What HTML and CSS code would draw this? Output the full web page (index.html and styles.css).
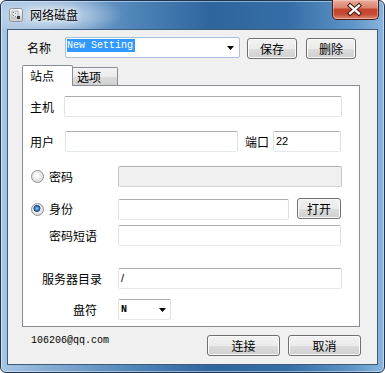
FILE: index.html
```html
<!DOCTYPE html>
<html lang="zh">
<head>
<meta charset="utf-8">
<title>网络磁盘</title>
<link rel="stylesheet" href="styles.css">
</head>
<body>
<div class="window">
  <div class="titlebar">
    <svg class="app-icon" width="14" height="14" viewBox="0 0 14 14">
      <defs>
        <linearGradient id="ig" x1="0" y1="0" x2="0" y2="1">
          <stop offset="0" stop-color="#fbfbfb"/>
          <stop offset="1" stop-color="#c9cbce"/>
        </linearGradient>
      </defs>
      <rect x="0.5" y="0.5" width="13" height="13" rx="2" fill="url(#ig)" stroke="#8d9298"/>
      <rect x="3" y="3" width="6" height="7" fill="#e9e9e9" stroke="#a4a4a4" stroke-width="0.8"/>
      <path d="M4 4h1v1H4zM6 5h1v1H6zM4 7h1v1H4zM6 8h1v1H6z" fill="#7c7c7c"/>
      <rect x="8" y="8" width="3" height="3" fill="#3a3a3a"/>
    </svg>
    <span class="title">网络磁盘</span>
    <div class="close">
      <svg width="47" height="20" viewBox="0 0 47 20">
        <path d="M18.5 5.5L27.5 13.5M27.5 5.5L18.5 13.5" stroke="#4a1d15" stroke-width="4.6" stroke-linecap="square"/>
        <path d="M18.5 5.5L27.5 13.5M27.5 5.5L18.5 13.5" stroke="#ffffff" stroke-width="2.4" stroke-linecap="square"/>
      </svg>
    </div>
  </div>

  <div class="client">
    <div class="name-row">
      <span class="name-label">名称</span>
      <div class="combo name-combo">
        <span class="sel">New Setting</span>
        <svg class="arrow" width="7" height="4" viewBox="0 0 7 4"><path d="M0 0H7L3.5 4Z" fill="#000"/></svg>
      </div>
      <button class="btn save">保存</button>
      <button class="btn del">删除</button>
    </div>

    <div class="tabs">
      <div class="tab active">站点</div>
      <div class="tab inactive">选项</div>
    </div>

    <div class="panel">
      <div class="row r-host">
        <span class="lbl l-host">主机</span>
        <div class="tb w-host"></div>
      </div>
      <div class="row r-user">
        <span class="lbl l-user">用户</span>
        <div class="tb w-user"></div>
        <span class="lbl l-port">端口</span>
        <div class="tb w-port"><span class="val">22</span></div>
      </div>
      <div class="row r-pass">
        <span class="radio"></span>
        <span class="lbl l-radio">密码</span>
        <div class="tb disabled w-pass"></div>
      </div>
      <div class="row r-id">
        <span class="radio checked"></span>
        <span class="lbl l-radio">身份</span>
        <div class="tb w-id"></div>
        <button class="btn open">打开</button>
      </div>
      <div class="row r-phrase">
        <span class="lbl l-phrase">密码短语</span>
        <div class="tb w-phrase"></div>
      </div>
      <div class="row r-dir">
        <span class="lbl l-dir">服务器目录</span>
        <div class="tb w-dir"><span class="val">/</span></div>
      </div>
      <div class="row r-drive">
        <span class="lbl l-drive">盘符</span>
        <div class="combo drive-combo">
          <span class="mono bold">N</span>
          <svg class="arrow" width="7" height="4" viewBox="0 0 7 4"><path d="M0 0H7L3.5 4Z" fill="#000"/></svg>
        </div>
      </div>
    </div>

    <div class="footer">
      <span class="email">106206@qq.com</span>
      <button class="btn big connect">连接</button>
      <button class="btn big cancel">取消</button>
    </div>
  </div>
</div>
</body>
</html>
```

FILE: styles.css
```css
* {
  box-sizing: border-box;
  margin: 0;
  padding: 0;
}

html, body {
  width: 385px;
  height: 373px;
  overflow: hidden;
  background: #ffffff;
}

body {
  font-family: "Noto Sans CJK SC", "Noto Sans", sans-serif;
  font-size: 12px;
  color: #000;
}

.window {
  width: 385px;
  height: 373px;
  border: 1px solid #1d3550;
  border-radius: 6px;
  padding: 0 6px 7px 6px;
  display: flex;
  flex-direction: column;
  background:
    radial-gradient(ellipse 70px 22px at 52px 14px, rgba(235, 243, 250, 0.85), rgba(235, 243, 250, 0) 100%),
    linear-gradient(to right, #a9c6e3 0%, #86acd3 12%, #4f84b9 35%, #2f659d 55%, #356ea6 75%, #5f95c7 92%, #8bb6dc 100%);
  box-shadow: inset 0 0 0 1px rgba(255, 255, 255, 0.45);
}

/* ---------- title bar ---------- */
.titlebar {
  height: 28px;
  display: flex;
  align-items: flex-start;
}

.app-icon {
  margin-left: 2px;
  margin-top: 7px;
  flex: none;
}

.title {
  margin-left: 7px;
  margin-top: 6px;
  line-height: 16px;
  font-size: 12px;
  color: #000;
  text-shadow: 0 0 6px rgba(255, 255, 255, 0.9), 0 0 2px rgba(255, 255, 255, 0.8);
}

.close {
  margin-left: auto;
  margin-right: -1px;
  margin-top: -1px;
  width: 47px;
  height: 20px;
  border: 1px solid #4b1e18;
  border-top: none;
  border-radius: 0 0 5px 5px;
  background: linear-gradient(to bottom, #e9ab9b 0%, #da8470 40%, #c5432c 50%, #c64a32 75%, #dc8c74 100%);
  box-shadow: inset 0 0 0 1px rgba(255, 220, 210, 0.45);
  display: flex;
}

.close svg {
  margin-left: -1px;
}

/* ---------- client ---------- */
.client {
  flex: 1;
  background: #f0f0f0;
  border: 1px solid #3e5b78;
  display: flex;
  flex-direction: column;
}

.name-row {
  margin-top: 7px;
  height: 22px;
  display: flex;
  align-items: flex-start;
  padding-left: 19px;
}

.name-label {
  width: 38px;
  line-height: 21px;
}

.combo {
  display: flex;
  align-items: flex-start;
  background: #fff;
  border-radius: 2px;
  height: 21px;
}

.name-combo {
  width: 175px;
  border: 1px solid #a7c0dc;
}

.sel {
  margin-left: 1px;
  margin-top: 1px;
  height: 13px;
  line-height: 13px;
  padding-right: 2px;
  background: #3399ff;
  color: #fff;
  font-family: "Liberation Mono", monospace;
  font-size: 10px;
  white-space: pre;
}

.arrow {
  margin-left: auto;
  margin-right: 5px;
  margin-top: 8px;
  flex: none;
}

.btn {
  font-family: "Noto Sans CJK SC", sans-serif;
  font-size: 12px;
  color: #000;
  height: 21px;
  line-height: 18px;
  border: 1px solid #707070;
  border-radius: 3px;
  background: linear-gradient(to bottom, #f2f2f2 0%, #ebebeb 50%, #dddddd 51%, #cfcfcf 100%);
  box-shadow: inset 0 0 0 1px #fbfbfb;
  text-align: center;
  flex: none;
}

.save {
  width: 50px;
  margin-left: 7px;
  margin-top: 1px;
}

.del {
  width: 50px;
  margin-left: 9px;
  margin-top: 1px;
}

/* ---------- tabs ---------- */
.tabs {
  margin-top: 6px;
  margin-left: 14px;
  height: 20px;
  display: flex;
  align-items: flex-start;
}

.tab {
  line-height: 17px;
}

.tab.active {
  position: relative;
  z-index: 1;
  width: 51px;
  height: 21px;
  padding-left: 7px;
  padding-top: 1px;
  background: #fff;
  border: 1px solid #898c95;
  border-bottom: none;
  border-radius: 2px 2px 0 0;
}

.tab.inactive {
  width: 45px;
  height: 18px;
  margin-top: 2px;
  padding-left: 4px;
  border: 1px solid #898c95;
  border-left: none;
  border-bottom: none;
  border-radius: 0 2px 0 0;
  background: linear-gradient(to bottom, #f3f3f3 0%, #ebebeb 50%, #dddddd 51%, #cfcfcf 100%);
}

.panel {
  margin-left: 14px;
  width: 338px;
  height: 242px;
  background: #fff;
  border: 1px solid #898c95;
  display: flex;
  flex-direction: column;
}

.row {
  display: flex;
  align-items: flex-start;
  height: 21px;
  flex: none;
}

.lbl {
  line-height: 21px;
  flex: none;
}

.tb {
  height: 21px;
  background: #fff;
  border: 1px solid;
  border-color: #abadb3 #dbdfe6 #e3e9ef #e2e3ea;
  border-radius: 2px;
  flex: none;
  display: flex;
  align-items: center;
}

.tb.disabled {
  background: #f0f0f0;
  border-color: #adb2b5 #c3c6ca #cfd2d5 #c3c6ca;
}

.val {
  margin-left: 2px;
  font-family: "Liberation Sans", sans-serif;
  font-size: 11px;
  line-height: 13px;
}

.r-host { margin-top: 10px; }
.l-host { width: 41px; padding-left: 7px; }
.w-host { width: 278px; }

.r-user { margin-top: 14px; }
.l-user { width: 42px; padding-left: 7px; }
.w-user { width: 173px; }
.l-port { width: 28px; margin-left: 7px; }
.w-port { width: 68px; }

.r-pass { margin-top: 14px; }
.radio {
  width: 13px;
  height: 13px;
  margin-left: 8px;
  margin-top: 4px;
  border-radius: 50%;
  border: 1px solid #8e8f8f;
  background: radial-gradient(circle at 45% 40%, #ffffff 0%, #ececec 45%, #c9c9c9 100%);
  flex: none;
}

.radio.checked {
  background:
    radial-gradient(circle at 45% 40%, #9fd4ff 0px, #3f8bd2 1.6px, #1c4f86 3.2px, rgba(28, 79, 134, 0) 3.8px),
    radial-gradient(circle at 45% 40%, #ffffff 0%, #ececec 45%, #c9c9c9 100%);
}

.l-radio { width: 69px; margin-left: 5px; }
.w-pass { width: 224px; }

.r-id { margin-top: 11px; height: 22px; }
.r-id .radio { margin-top: 5px; }
.w-id { width: 171px; margin-top: 1px; }
.open { width: 44px; margin-left: 8px; }

.r-phrase { margin-top: 5px; }
.l-phrase { width: 95px; padding-left: 26px; }
.w-phrase { width: 223px; }

.r-dir { margin-top: 22px; }
.l-dir { width: 95px; padding-left: 19px; }
.w-dir { width: 224px; }

.r-drive { margin-top: 10px; }
.l-drive { width: 95px; padding-left: 50px; }

.drive-combo {
  width: 53px;
  border: 1px solid;
  border-color: #abadb3 #dbdfe6 #e3e9ef #e2e3ea;
}

.mono {
  margin-left: 2px;
  margin-top: 3px;
  font-family: "Liberation Mono", monospace;
  font-size: 10px;
  line-height: 13px;
}

.bold { font-weight: bold; }

.drive-combo .arrow {
  margin-right: 4px;
}

/* ---------- footer ---------- */
.footer {
  margin-top: 8px;
  display: flex;
  align-items: flex-start;
  padding-left: 23px;
  padding-right: 16px;
}

.email {
  font-family: "Liberation Mono", monospace;
  font-size: 10px;
  line-height: 12px;
  margin-top: 0px;
}

.btn.big {
  width: 73px;
}

.connect { margin-left: auto; }
.cancel { margin-left: 8px; }
```
